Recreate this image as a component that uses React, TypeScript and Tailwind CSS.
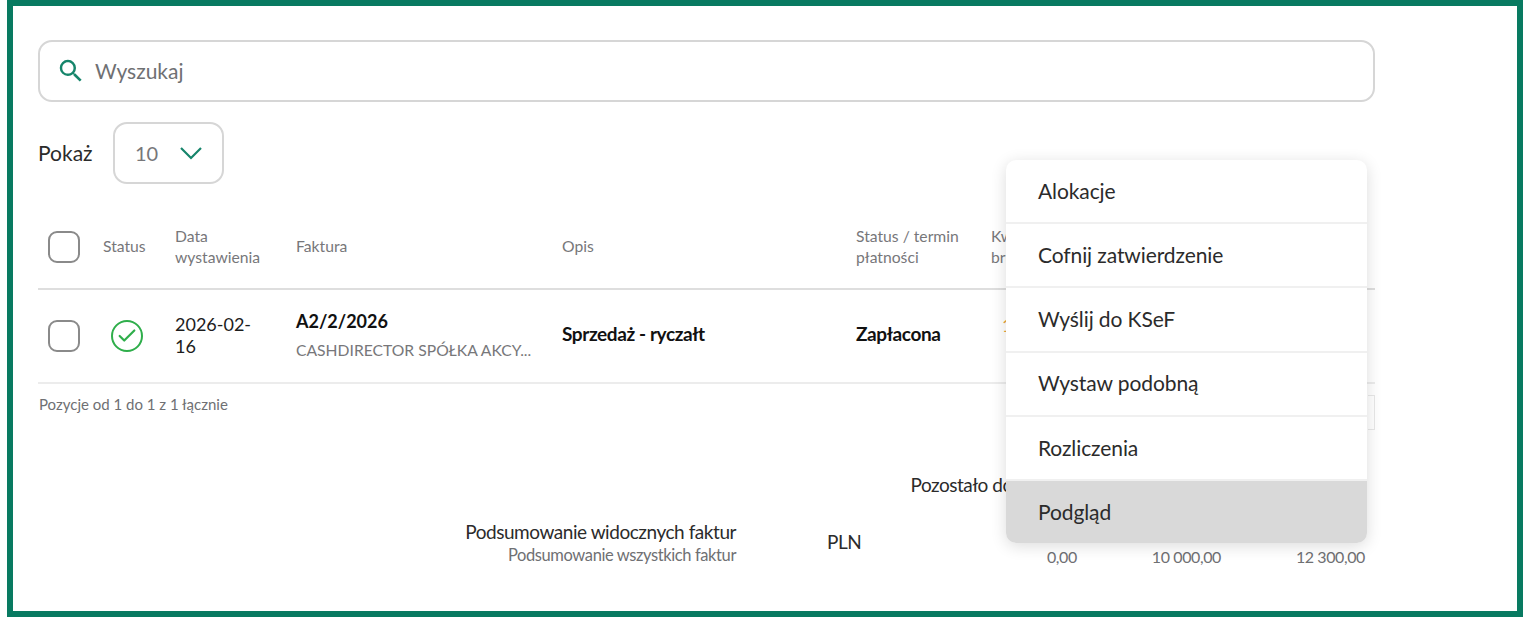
import { Check } from "lucide-react";

const menuItems = ["Alokacje", "Cofnij zatwierdzenie", "Wyślij do KSeF", "Wystaw podobną", "Rozliczenia"];

const Checkbox = () => (
  <div className="w-[32px] h-[32px] rounded-[9px] border-2 border-[#8a8a8a] bg-white" />
);

const ActionsMenu = () => (
  <div className="absolute left-[1006px] top-[160px] w-[361px] rounded-[10px] bg-white shadow-[0_3px_16px_rgba(0,0,0,0.14)] overflow-hidden">
    {menuItems.map((item) => (
      <div key={item} className="h-[64.2px] flex items-center pl-[32px] pb-[1px] border-b-2 border-[#f0f0f0] text-[21px] tracking-[-0.1px] text-[#2b2b2b]">
        {item}
      </div>
    ))}
    <div className="h-[62px] flex items-center pl-[32px] bg-[#d9d9d9] text-[21px] tracking-[-0.1px] text-[#2b2b2b]">Podgląd</div>
  </div>
);

export default function App() {
  return (
    <div className="relative w-[1525px] h-[619px] bg-white font-['Lato','Open_Sans',sans-serif] overflow-hidden">
      <div className="relative ml-[7px] w-[1516px] h-[617px] border-[6px] border-[#087a61] bg-white">
        <div className="w-[1337px] ml-[25px] pt-[34px]">
          <div className="h-[62px] rounded-[14px] border-2 border-[#d6d6d6] flex items-center pl-[16px]">
            <svg width="30" height="30" viewBox="0 0 24 24" fill="#16856b">
              <path d="M15.5 14h-.79l-.28-.27A6.471 6.471 0 0 0 16 9.5 6.5 6.5 0 1 0 9.5 16c1.61 0 3.09-.59 4.23-1.57l.27.28v.79l5 4.99L20.49 19l-4.99-5zm-6 0C7.01 14 5 11.99 5 9.5S7.01 5 9.5 5 14 7.01 14 9.5 11.99 14 9.5 14z" />
            </svg>
            <span className="ml-[9px] text-[21px] text-[#6f7073]">Wyszukaj</span>
          </div>

          <div className="flex items-center mt-[20px] h-[62px]">
            <span className="text-[21px] text-[#2b2b2b] w-[75px]">Pokaż</span>
            <div className="w-[111px] h-[62px] rounded-[14px] border-2 border-[#d6d6d6] flex items-center pl-[20px] gap-[21px]">
              <span className="text-[20px] text-[#77777a]">10</span>
              <svg width="24" height="14" viewBox="0 0 24 14" fill="none" stroke="#16856b" strokeWidth="2.2">
                <path d="M2 2l10 10L22 2" />
              </svg>
            </div>
          </div>

          <div className="flex items-center h-[105px] mt-[1px] pt-[20px] border-b-2 border-[#dedede] text-[15.7px] leading-[21px] text-[#77777a]">
            <div className="w-[65px] pl-[10px]"><Checkbox /></div>
            <div className="w-[72px]">Status</div>
            <div className="w-[121px]">Data<br />wystawienia</div>
            <div className="w-[266px]">Faktura</div>
            <div className="w-[294px]">Opis</div>
            <div className="w-[135px]">Status / termin<br />płatności</div>
            <div>Kwota<br />brutto</div>
          </div>

          <div className="flex items-center h-[94px] border-b-2 border-[#ececec]">
            <div className="w-[65px] pl-[10px]"><Checkbox /></div>
            <div className="w-[72px] pl-[8px]">
              <div className="w-[32px] h-[32px] rounded-full border-[2.5px] border-[#2fae4b] flex items-center justify-center">
                <Check size={22} strokeWidth={2.4} className="text-[#2fae4b]" />
              </div>
            </div>
            <div className="w-[121px] pb-[2px] text-[18px] leading-[22px] text-[#1d1d1d]">2026-02-<br />16</div>
            <div className="w-[266px] pb-[2px]">
              <div className="text-[18px] font-bold leading-[24px] -mt-[1px] text-[#111]">A2/2/2026</div>
              <div className="text-[15.7px] leading-[22px] mt-[6px] text-[#77777a]">CASHDIRECTOR SPÓŁKA AKCY...</div>
            </div>
            <div className="w-[294px] pb-[4px] text-[19px] font-bold tracking-[-0.4px] text-[#111]">Sprzedaż - ryczałt</div>
            <div className="w-[146px] pb-[4px] text-[19px] font-bold tracking-[-0.4px] text-[#111]">Zapłacona</div>
            <div className="text-[18px] pb-[22px] text-[#e8a33d]">12 300,00</div>
          </div>

          <div className="flex items-center justify-between h-[42px]">
            <span className="text-[15px] pl-[1px] pb-[2px] text-[#6f7073]">Pozycje od 1 do 1 z 1 łącznie</span>
            <div className="w-[7px] h-[35px] border border-l-0 border-[#e8e8e8] mt-[14px]" />
          </div>

          <div className="flex justify-end h-[68px] pt-[47px] pr-[301px]">
            <span className="text-[19px] leading-[24px] tracking-[-0.5px] text-[#2b2b2b]">Pozostało do zapłaty</span>
          </div>

          <div className="flex items-start mt-[25px]">
            <div className="w-[698px] text-right pt-[1px]">
              <div className="text-[19px] leading-[24px] tracking-[-0.45px] text-[#2b2b2b]">Podsumowanie widocznych faktur</div>
              <div className="text-[16.5px] leading-[22px] tracking-[-0.4px] text-[#6f7073]">Podsumowanie wszystkich faktur</div>
            </div>
            <div className="ml-[91px] mt-[9px] text-[19px] tracking-[-0.5px] text-[#2b2b2b]">PLN</div>
            <div className="ml-auto mr-[10px] mt-[26px] flex text-[16px] leading-[24px] tracking-[-0.4px] text-[#6f7073]">
              <span>0,00</span>
              <span className="ml-[75px]">10 000,00</span>
              <span className="ml-[75px]">12 300,00</span>
            </div>
          </div>
        </div>
      </div>
      <ActionsMenu />
    </div>
  );
}
